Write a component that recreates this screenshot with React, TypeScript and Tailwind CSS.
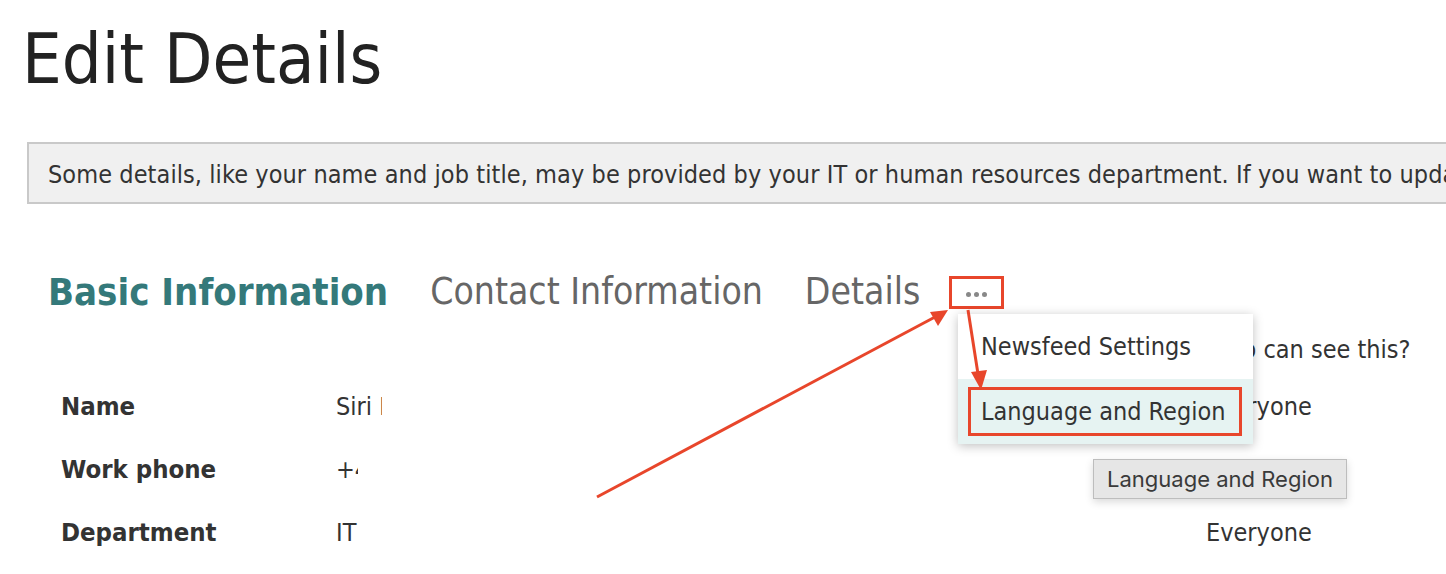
import React from "react";

const tahoma = { fontFamily: '"DejaVu Sans Condensed", "DejaVu Sans", sans-serif' };

export default function App() {
  return (
    <div className="relative w-[1446px] h-[574px] overflow-hidden bg-white text-[#222]" style={tahoma}>
      <h1 className="pl-[22px] pt-[14px] text-[70px] leading-[90px] font-normal text-[#222]">Edit Details</h1>

      <div className="ml-[27px] mt-[38px] h-[62px] border-2 border-r-0 border-[#c9c9c9] bg-[#f0f0f0] flex items-center pl-[19px] pt-[4px] whitespace-nowrap overflow-hidden">
        <span className="text-[25px] tracking-[0.08px] text-[#333]">
          Some details, like your name and job title, may be provided by your IT or human resources department. If you want to update
        </span>
      </div>

      <div className="flex items-center pl-[48px] mt-[66px] h-[44px] whitespace-nowrap">
        <span className="text-[38px] font-bold text-[#34797a]">Basic Information</span>
        <span className="ml-[42px] text-[37px] text-[#666]">Contact Information</span>
        <span className="ml-[42px] text-[37px] text-[#666]">Details</span>
        <span className="ml-[29px] w-[55px] h-[33px] border-[3px] border-[#e8462b] flex items-center justify-center gap-[3px] pt-[4px]">
          <span className="w-[5px] h-[5px] rounded-full bg-[#888]" />
          <span className="w-[5px] h-[5px] rounded-full bg-[#888]" />
          <span className="w-[5px] h-[5px] rounded-full bg-[#888]" />
        </span>
      </div>

      <div className="grid grid-cols-[275px_870px_1fr] pl-[61px] mt-[18px] text-[25px] text-[#333]">
        <div className="h-[43px]" />
        <div />
        <div className="h-[43px] flex items-center pb-[8px] whitespace-nowrap">Who can see this?</div>

        <div className="h-[63px] flex items-center font-bold text-[25.5px]">Name</div>
        <div className="flex items-center"><span className="w-[46px] overflow-hidden whitespace-nowrap">Siri L</span></div>
        <div className="flex items-center">Everyone</div>

        <div className="h-[63px] flex items-center font-bold text-[25.5px]">Work phone</div>
        <div className="flex items-center"><span className="w-[22px] overflow-hidden whitespace-nowrap">+46</span></div>
        <div className="flex items-center">Everyone</div>

        <div className="h-[63px] flex items-center font-bold text-[25.5px]">Department</div>
        <div className="flex items-center">IT</div>
        <div className="flex items-center">Everyone</div>
      </div>

      {/* dropdown menu */}
      <div className="absolute left-[958px] top-[314px] w-[295px] bg-white shadow-[0_2px_10px_rgba(0,0,0,0.25)] text-[25px] text-[#333]">
        <div className="h-[65px] flex items-center pl-[23px]">Newsfeed Settings</div>
        <div className="h-[65px] bg-[#e6f3f2] flex items-center px-[10px]">
          <div className="w-[274px] h-[49px] border-[3px] border-[#e8462b] flex items-center pl-[10px] whitespace-nowrap">Language and Region</div>
        </div>
      </div>

      {/* tooltip */}
      <div
        className="absolute left-[1093px] top-[459px] w-[254px] h-[40px] bg-[#e6e6e6] border border-[#bdbdbd] shadow-[0_3px_8px_rgba(0,0,0,0.15)] flex items-center justify-center text-[22px] text-[#3a3a3a]"
        style={{ fontFamily: 'Inter, "Noto Sans", sans-serif' }}
      >
        Language and Region
      </div>

      {/* arrows */}
      <svg className="absolute left-0 top-0" width="1446" height="574" viewBox="0 0 1446 574">
        <line x1="597" y1="497" x2="935" y2="317" stroke="#e8462b" strokeWidth="3" />
        <polygon points="948,310 930,312 938,326" fill="#e8462b" />
        <line x1="968" y1="310" x2="978" y2="374" stroke="#e8462b" strokeWidth="3" />
        <polygon points="981,390 971,372 987,370" fill="#e8462b" />
      </svg>
    </div>
  );
}
